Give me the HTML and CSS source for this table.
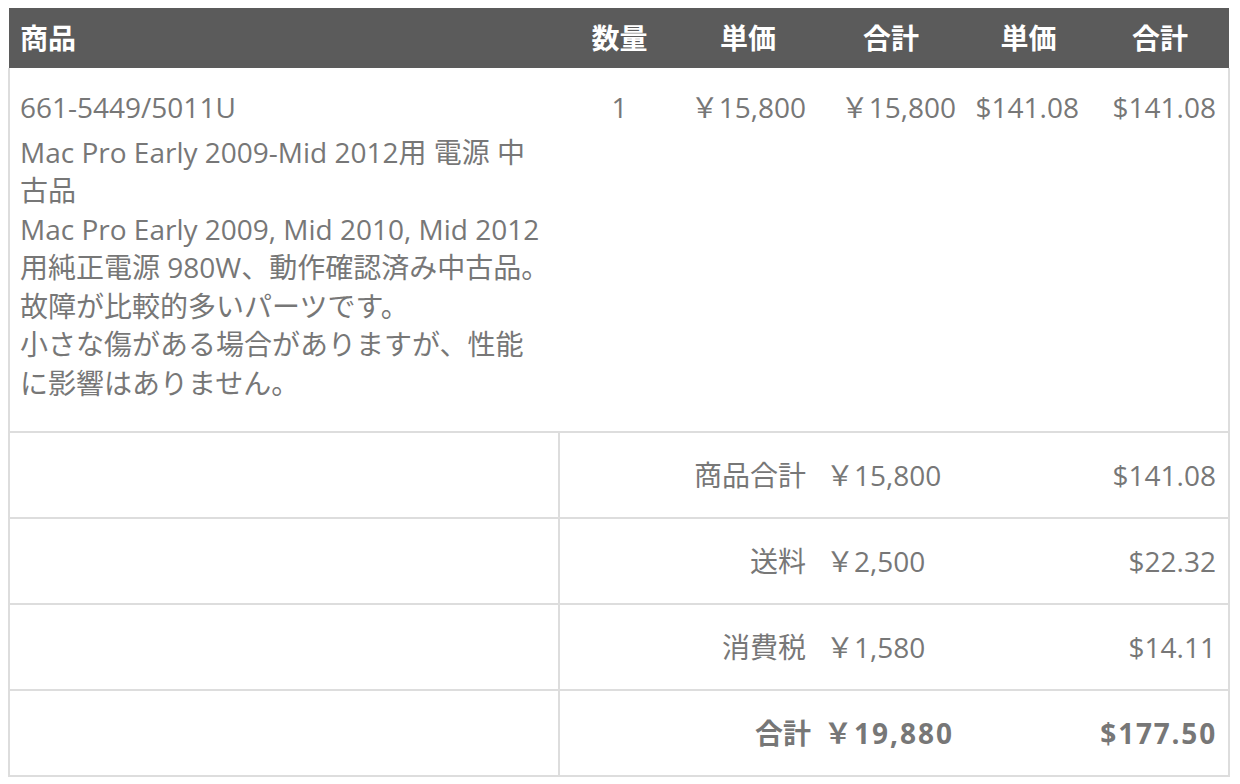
FILE: index.html
```html
<!DOCTYPE html>
<html lang="ja">
<head>
<meta charset="utf-8">
<title>注文明細</title>
<link rel="stylesheet" href="styles.css">
</head>
<body>
<table class="order">
  <colgroup>
    <col class="c-item">
    <col class="c-qty">
    <col class="c-price">
    <col class="c-total">
    <col class="c-usd-price">
    <col class="c-usd-total">
  </colgroup>
  <thead>
    <tr>
      <th class="h-item">商品</th>
      <th>数量</th>
      <th>単価</th>
      <th>合計</th>
      <th>単価</th>
      <th>合計</th>
    </tr>
  </thead>
  <tbody>
    <tr class="item-row">
      <td class="item">
        <div class="code">661-5449/5011U</div>
        <div class="name">Mac Pro Early 2009-Mid 2012用 電源 中<br>古品</div>
        <div class="desc">Mac Pro Early 2009, Mid 2010, Mid 2012<br>用純正電源 980W、動作確認済み中古品。<br>故障が比較的多いパーツです。<br>小さな傷がある場合がありますが、性能<br>に影響はありません。</div>
      </td>
      <td class="qty">1</td>
      <td class="num">￥15,800</td>
      <td class="num">￥15,800</td>
      <td class="num">$141.08</td>
      <td class="num">$141.08</td>
    </tr>
    <tr class="sum">
      <td class="blank"></td>
      <td class="lbl" colspan="2">商品合計</td>
      <td class="yen">￥15,800</td>
      <td class="usd" colspan="2">$141.08</td>
    </tr>
    <tr class="sum">
      <td class="blank"></td>
      <td class="lbl" colspan="2">送料</td>
      <td class="yen">￥2,500</td>
      <td class="usd" colspan="2">$22.32</td>
    </tr>
    <tr class="sum">
      <td class="blank"></td>
      <td class="lbl" colspan="2">消費税</td>
      <td class="yen">￥1,580</td>
      <td class="usd" colspan="2">$14.11</td>
    </tr>
    <tr class="sum grand">
      <td class="blank"></td>
      <td class="lbl" colspan="2">合計</td>
      <td class="yen">￥19,880</td>
      <td class="usd" colspan="2">$177.50</td>
    </tr>
  </tbody>
</table>
</body>
</html>
```

FILE: styles.css
```css
body {
  margin: 8px;
  background: #ffffff;
  font-family: "Open Sans", "Noto Sans CJK JP", sans-serif;
  font-size: 28px;
  line-height: 38.5px;
  color: #777777;
}

.order {
  width: 1220px;
  border-collapse: collapse;
  table-layout: fixed;
}

.c-item { width: 550px; }
.c-qty { width: 121px; }
.c-price { width: 136px; }
.c-total { width: 150px; }
.c-usd-price { width: 125px; }
.c-usd-total { width: 138px; }

.order th {
  height: 60px;
  padding: 0;
  background: #5b5b5b;
  color: #ffffff;
  font-weight: bold;
  text-align: center;
  vertical-align: middle;
  border: none;
}

.order th.h-item {
  text-align: left;
  padding-left: 11px;
}

.item-row td {
  vertical-align: top;
  padding: 20px 12px 29px 0;
  border-top: none;
  border-bottom: 2px solid #dddddd;
}

.item-row td.item {
  padding-left: 10px;
  padding-right: 0;
  white-space: nowrap;
  border-left: 2px solid #dddddd;
}

.item .code {
  margin-bottom: 6px;
}

.item-row td:last-child {
  border-right: 2px solid #dddddd;
}

.item-row .qty {
  text-align: center;
  padding-right: 0;
}

.item-row .num {
  text-align: right;
  padding-right: 10px;
  white-space: nowrap;
}

.item-row .num:nth-child(5),
.item-row .num:nth-child(6) {
  padding-right: 12px;
}

.sum td {
  height: 84px;
  padding: 0;
  vertical-align: middle;
  border-top: 2px solid #dddddd;
  border-bottom: 2px solid #dddddd;
  white-space: nowrap;
}

.sum td.blank {
  border-left: 2px solid #dddddd;
  border-right: 2px solid #dddddd;
}

.sum td.lbl {
  text-align: right;
  padding-right: 10px;
  border-left: none;
  border-right: none;
}

.sum td.yen {
  text-align: left;
  padding-left: 10px;
  border-left: none;
  border-right: none;
}

.sum td.usd {
  text-align: right;
  padding-right: 12px;
  border-left: none;
  border-right: 2px solid #dddddd;
}

.grand td {
  font-weight: bold;
}

.grand td.lbl {
  padding-right: 5px;
}

.grand td.yen {
  padding-left: 8px;
  letter-spacing: 2px;
}

.grand td.usd {
  letter-spacing: 1.8px;
  padding-right: 11px;
}
```
